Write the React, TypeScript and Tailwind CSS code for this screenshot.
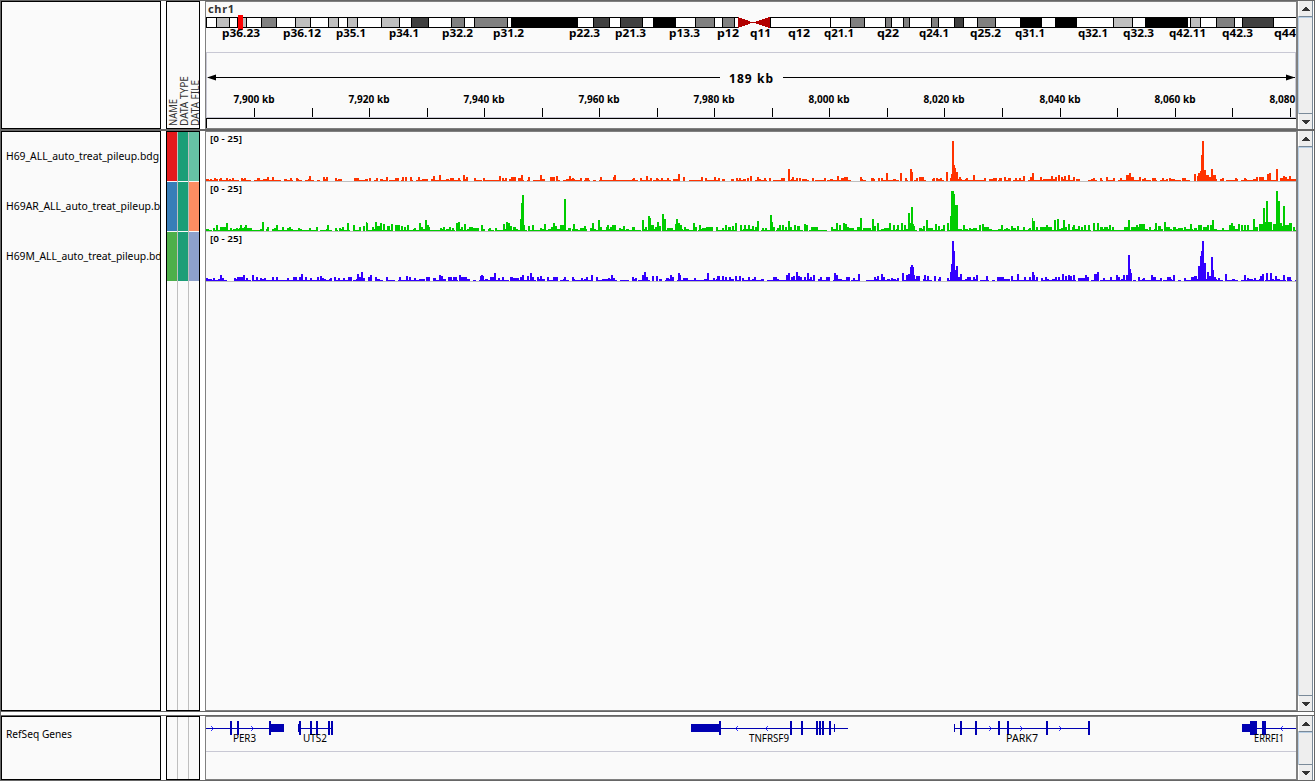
const FONT = "font-['Noto_Sans','Open_Sans',sans-serif]";

type BandTone = "light" | "mid" | "dark" | "black";

const BAND_FILL: Record<BandTone, string> = {
  light: "#bfbfbf",
  mid: "#808080",
  dark: "#404040",
  black: "#000000",
};

// [start, end, stain]
const BANDS: [number, number, BandTone][] = [
  [216, 229, "light"],
  [237, 246, "light"],
  [261, 276, "mid"],
  [295, 310, "light"],
  [328, 338, "light"],
  [347, 357, "light"],
  [381, 399, "light"],
  [411, 428, "dark"],
  [451, 464, "mid"],
  [474, 507, "mid"],
  [511, 577, "black"],
  [593, 609, "dark"],
  [620, 642, "dark"],
  [653, 675, "black"],
  [695, 714, "mid"],
  [722, 734, "mid"],
  [850, 864, "mid"],
  [885, 891, "mid"],
  [903, 909, "mid"],
  [931, 938, "mid"],
  [954, 963, "dark"],
  [977, 995, "mid"],
  [1020, 1041, "black"],
  [1055, 1076, "black"],
  [1113, 1132, "light"],
  [1145, 1187, "black"],
  [1190, 1200, "light"],
  [1216, 1234, "mid"],
  [1242, 1273, "dark"],
];

// [text, x, width]
const BAND_LABELS: [string, number, number][] = [
  ["p36.23", 222, 38],
  ["p36.12", 283, 38],
  ["p35.1", 336, 30],
  ["p34.1", 389, 30],
  ["p32.2", 442, 31],
  ["p31.2", 493, 31],
  ["p22.3", 569, 31],
  ["p21.3", 615, 31],
  ["p13.3", 669, 31],
  ["p12", 717, 22],
  ["q11", 750, 21],
  ["q12", 788, 22],
  ["q21.1", 824, 30],
  ["q22", 877, 22],
  ["q24.1", 919, 30],
  ["q25.2", 970, 31],
  ["q31.1", 1015, 30],
  ["q32.1", 1078, 30],
  ["q32.3", 1123, 31],
  ["q42.11", 1169, 37],
  ["q42.3", 1222, 31],
  ["q44", 1274, 22],
];

const TICKS = [
  254, 312, 369, 427, 484, 542, 599, 657, 714, 772, 829, 887, 944, 1002, 1060,
  1117, 1175, 1232, 1290,
];

// Signal columns as x:height or x:height:width, two pixels wide by default.
const TRACKS = [
  {
    name: "H69_ALL_auto_treat_pileup.bdg",
    nameWidth: 153,
    color: "#ff3300",
    density: 0.68,
    seed: 11,
    cells: ["bg-[#e41a1c]", "bg-[#1b9e77]", "bg-[#66c2a5]"],
    signal:
      "210:2 214:3 219:2 220:3 226:3 229:2 232:3 241:3 244:3 257:3:3 263:2:5 267:4 272:4 290:3 296:3 309:5 323:4 326:4 335:3 338:2:4 354:3:5 369:3 376:3 386:4 395:3:4 402:4 405:4 410:4 418:4 433:5 439:6 450:3:4 458:3 463:6 466:4 474:3 483:3 499:5 502:3 505:3 511:4:5 518:3:5 521:6 528:4 540:6 550:4:5 556:5 569:5 572:3 580:3 585:3:4 600:4 613:4 614:6 633:3 640:3 646:5 650:3 656:3 661:3 667:3 673:2:4 678:7 683:4 701:4 705:3 714:4 718:3 723:2 736:3 739:3 747:3 750:5 757:4 764:3 769:3 781:3:4 788:12 792:4 796:3 799:3 802:2:5 812:3 824:3 837:5 841:3:4 844:4:4 860:4 871:3:3 878:3 881:3 886:8 900:8 905:3 910:12 911:9:2 916:3 919:4:5 933:3 936:3 940:3 946:9 950:3 951:7:1 952:40 954:16:1 955:13:1 956:9:2 959:4 966:3 973:6 984:3 993:3:4 999:3:3 1004:4 1008:3:3 1015:3 1019:3 1023:5 1030:4 1032:8 1040:4 1051:5 1055:4 1058:6 1061:4 1064:5 1068:6 1073:4 1078:2 1093:3 1100:3 1106:4 1113:3 1120:3 1126:6:4 1129:8 1131:4:3 1139:4 1144:3 1152:3:4 1162:3 1166:2 1169:3 1182:3:4 1194:7 1197:5:2 1198:8:2 1200:10:2 1201:26:1 1202:40:2 1204:11:2 1206:6:3 1209:4:2 1211:12:2 1213:6:3 1222:3 1235:3 1244:3 1256:4 1259:4:5 1267:7:2 1269:8:2 1276:12:2 1280:3:3 1283:5:2 1285:4:2 1289:5:2",
  },
  {
    name: "H69AR_ALL_auto_treat_pileup.bdg",
    nameWidth: 167,
    color: "#00cc00",
    density: 0.85,
    seed: 29,
    cells: ["bg-[#377eb8]", "bg-[#1b9e77]", "bg-[#fc8d62]"],
    signal:
      "213:3 216:6 220:4:6 226:8 230:3 236:3 239:3:13 240:6 244:4 245:6 262:9 267:4 274:3 276:6 282:4 287:3 289:4 298:3 309:3 316:4 327:6 335:3 339:3 342:4 347:8 353:6 359:4 363:5 366:9:1 367:8:1 372:4 375:9 377:5:3 380:8 383:7:2 387:5:3 391:7 395:6:4 398:6 401:5 404:4 407:6 414:3 419:8 421:4 425:11 427:6 428:4 440:3 443:4 449:4 452:3 456:8 458:9 461:4 464:7 469:4:4 473:3:6 481:6 489:3 495:3 503:7 506:9 508:8:2 510:5:2 513:4:3 520:12:1 521:28:1 522:36:2 524:6:1 528:5 532:6 540:3 544:7 551:4 553:8 555:5:2 560:6:4 564:32 568:3:3 573:7 580:3:5 584:5 590:3 592:8 598:11 600:4 606:4 607:6 610:4:4 612:6:4 619:3 623:5 627:2 632:4:3 642:11 645:4 648:15 650:13:1 651:6:3 655:4 657:9 659:5 662:17 664:12:2 667:3:6 675:7 676:12 678:8:2 680:6:2 684:4 693:8 695:4 699:6 702:3:8 706:4:7 716:4 722:3 725:6:2 728:4:3 732:5 735:8 740:6 744:6 748:6 752:5 755:4:3 757:10 762:3 765:3 770:16 772:9:1 773:4:2 777:3 779:6 782:6 785:4:2 788:10 790:4 794:6 797:5:3 804:7 806:6:2 811:4:7 831:4 836:8 839:6 843:8:2 845:7:2 847:4:2 849:3:5 857:4:4 860:13 863:3:8 872:12 874:5 877:8 884:3:5 889:8 893:6 897:6 901:8 904:6 908:18 909:8 911:24 913:7:1 914:5:1 919:3:3 923:5 926:11 928:3:5 935:7 938:5 943:6 947:8 950:15:1 951:40:3 954:37:1 955:26:3 963:6 969:3 973:3:4 979:6 982:7 984:4:5 1001:6 1006:3 1011:5 1013:3:3 1017:5 1023:4 1029:3 1032:13:1 1033:10:2 1036:4 1040:4:3 1043:4:4 1046:6 1048:4:4 1054:11 1057:12 1061:3 1063:11 1065:4 1068:7 1072:4 1073:6:2 1078:5 1081:4 1084:6 1088:6 1093:8 1097:8 1100:4:3 1104:4:4 1109:6 1112:4 1124:4:4 1128:11 1131:4:8 1136:6 1139:7:6 1149:4 1155:8 1158:5:3 1164:9 1166:4:4 1173:4:3 1178:3:5 1184:4 1190:7 1194:3:3 1198:6:4 1203:4:4 1207:6:2 1210:6:2 1212:11:2 1222:3 1229:6 1231:8 1233:5 1238:7 1241:6 1244:6 1247:6 1253:12 1255:4:3 1259:7:4 1263:23:2 1265:9:1 1266:30:2 1268:9:4 1273:7:3 1276:40:2 1278:30:2 1280:8:2 1282:5:1 1283:25:2 1285:6:4 1289:8:3 1293:4:2",
  },
  {
    name: "H69M_ALL_auto_treat_pileup.bdg",
    nameWidth: 162,
    color: "#3300ff",
    density: 0.8,
    seed: 47,
    cells: ["bg-[#4daf4a]", "bg-[#1b9e77]", "bg-[#8da0cb]"],
    signal:
      "206:3 213:3 220:6 222:3 234:3 237:4:3 240:4:4 243:6 246:3 252:6 256:4 260:3 264:3 272:4 276:4 287:3 293:4:4 299:4 301:7 305:4 310:3 317:4 320:5 322:3 330:3 334:4 338:3 343:3 348:4:4 357:7 359:4 361:9 363:3 368:4 370:6 375:4 386:4 399:4 406:5 409:4 414:3 426:4:4 433:3:3 439:6 441:5 448:4:4 453:4:4 459:6 461:4:6 480:5:1 481:6:2 483:5:1 490:4:4 494:8 498:3 502:4 510:4:3 513:3:6 520:4 522:6 527:5 530:8 532:4 537:4 540:5 547:4 553:4:5 564:4 572:4 581:3 586:4 591:6 596:4 608:3 611:6 613:3 632:4 635:3 642:6 644:9 646:4 652:5 656:5 666:3:3 670:6 672:4 678:8 680:6:1 683:3:5 694:3 707:8 713:3 717:5:3 722:5:2 725:4 729:4 735:5 739:5:2 742:3 748:4 754:4 773:4:4 786:6 788:8 791:4 793:5 796:9 798:5 800:4 804:4 807:8 810:4 813:6 820:4 826:4:4 834:8 836:6 846:4:4 853:3 858:7 874:4 877:5 881:7 883:4 891:3 897:3 902:8 906:6 908:7:2 910:14:1 911:16:2 913:14:1 914:6:1 916:5:4 924:6 927:5 934:5 939:4 947:3 950:9:1 951:17:1 952:40:2 954:30:1 955:11:1 956:15:2 958:4 960:7 967:4:4 973:4 976:6 986:5 997:4:7 1002:4 1011:5 1017:7 1024:4 1029:4 1032:9 1034:6:1 1036:4 1041:3 1045:4 1055:4 1058:4 1062:7 1065:5 1068:6 1070:5 1073:6 1078:3:7 1085:6 1087:4 1094:7:4 1097:9 1103:3 1110:4 1116:6 1118:4 1123:6 1126:6:2 1128:26 1130:12:1 1131:8:1 1138:4 1143:3 1151:6 1153:4:3 1160:3 1167:4:4 1173:6 1184:3 1191:4:4 1194:5:3 1198:15:2 1200:25:1 1201:30:1 1202:40:2 1204:18:2 1207:9 1209:5 1211:24:2 1213:11:1 1214:4:2 1218:3 1225:7 1244:6 1247:3 1254:3 1260:5 1262:7 1266:8 1270:8 1275:5 1283:6 1287:4:4",
  },
];

type Gene = {
  name: string;
  label: [number, number];
  line: [number, number];
  exons: [number, number][];
  utrs: [number, number][];
  arrows: number[];
  forward: boolean;
};

const GENES: Gene[] = [
  {
    name: "PER3",
    label: [233, 23],
    line: [206, 271],
    exons: [[230, 2], [237, 2], [269, 2]],
    utrs: [[271, 13]],
    arrows: [213, 253],
    forward: true,
  },
  {
    name: "UTS2",
    label: [303, 24],
    line: [298, 333],
    exons: [[299, 2], [310, 2], [316, 2], [328, 2], [331, 2]],
    utrs: [[298, 2]],
    arrows: [],
    forward: false,
  },
  {
    name: "TNFRSF9",
    label: [749, 40],
    line: [720, 848],
    exons: [[719, 2], [790, 2], [801, 2], [816, 2], [819, 2], [822, 2], [829, 2]],
    utrs: [[691, 29], [834, 1]],
    arrows: [736, 766],
    forward: false,
  },
  {
    name: "PARK7",
    label: [1006, 32],
    line: [954, 1090],
    exons: [[960, 2], [975, 2], [998, 2], [1007, 2], [1046, 2], [1088, 2]],
    utrs: [[954, 1]],
    arrows: [991, 1022, 1061],
    forward: true,
  },
  {
    name: "ERRFI1",
    label: [1254, 30],
    line: [1250, 1296],
    exons: [[1250, 7], [1262, 4]],
    utrs: [[1242, 8]],
    arrows: [1281],
    forward: false,
  },
];

// Low background coverage between the called columns.
function background(seed: number, density: number, base: number) {
  let s = seed;
  let d = "";
  for (let x = 206; x < 1296; x += 3) {
    s = (s * 16807) % 2147483647;
    const r = s / 2147483647;
    if (r > density) continue;
    const h = r < density * 0.25 ? 2 : 1;
    d += `M${x} ${base}v-${h}h3v${h}z`;
  }
  return d;
}

function columns(signal: string, base: number) {
  return signal
    .split(" ")
    .map((item) => {
      const [x, h, w = 2] = item.split(":").map(Number);
      return `M${x} ${base}v-${h}h${w}v${h}z`;
    })
    .join("");
}

function ScrollBar() {
  return (
    <div className="flex w-[17px] shrink-0 flex-col border-l border-[#808080] bg-white pr-px">
      <div className="flex grow flex-col border-r border-[#7a8a99] bg-[#eeeeee]">
        <div className="flex h-4 items-center justify-center border-b border-l border-b-[#7a8a99] border-l-white">
          <svg width="8" height="4" className="fill-[#333333]" shapeRendering="crispEdges">
            <path d="M3 0h2v1h1v1h1v1h1v1H0V3h1V2h1V1h1z" />
          </svg>
        </div>
        <div className="grow border-t border-l border-[#b8cfe5]" />
        <div className="flex h-4 items-center justify-center border-t border-l border-t-[#7a8a99] border-l-white">
          <svg width="8" height="4" className="fill-[#333333]" shapeRendering="crispEdges">
            <path d="M0 0h8v1H7v1H6v1H5v1H3V3H2V2H1V1H0z" />
          </svg>
        </div>
      </div>
    </div>
  );
}

function TrackName({ name, width }: { name: string; width: number }) {
  return (
    <svg width="158" height="50" className={`block shrink-0 text-[11px] ${FONT}`}>
      <text x="4" y="28" textLength={width} lengthAdjust="spacingAndGlyphs">
        {name}
      </text>
    </svg>
  );
}

function AttributeHeader() {
  const names: [string, number, number][] = [
    ["NAME", 10, 27],
    ["DATA TYPE", 21, 50],
    ["DATA FILE", 32, 46],
  ];
  return (
    <svg width="32" height="126" className={`text-[10px] ${FONT}`}>
      {names.map(([name, x, length]) => (
        <text
          key={name}
          transform={`translate(${x} 124) rotate(-90)`}
          textLength={length}
          lengthAdjust="spacingAndGlyphs"
          fill="#333"
        >
          {name}
        </text>
      ))}
    </svg>
  );
}

function Ideogram() {
  return (
    <g shapeRendering="crispEdges">
      <rect x="206" y="17" width="532" height="11" fill="#000" />
      <rect x="207" y="18" width="531" height="9" fill="#fff" />
      <rect x="770" y="17" width="526" height="11" fill="#000" />
      <rect x="771" y="18" width="525" height="9" fill="#fff" />
      <rect x="830" y="18" width="1" height="9" fill="#000" />
      {BANDS.map(([start, end, tone]) => (
        <rect
          key={start}
          x={start + 0.5}
          y="17.5"
          width={end - start}
          height="10"
          fill={BAND_FILL[tone]}
          stroke="#000"
        />
      ))}
      <path d="M738 17l15 5.5l-15 5.5zM770 17l-17 5.5l17 5.5z" fill="#b20000" />
      <rect x="238" y="15" width="5" height="15" fill="#f00" />
    </g>
  );
}

function Header() {
  return (
    <svg width="1090" height="126" viewBox="206 2 1090 126" className={FONT}>
      <text x="208" y="13" textLength="26" className="text-[11px] font-bold" fill="#333">
        chr1
      </text>
      <Ideogram />
      <g className="text-[11px] font-bold">
        {BAND_LABELS.map(([label, x, length]) => (
          <text key={label} x={x} y="37" textLength={length} lengthAdjust="spacingAndGlyphs">
            {label}
          </text>
        ))}
      </g>
      <g shapeRendering="crispEdges">
        <path d="M206.5 118V52.5H1295.5V117.5H206" fill="none" stroke="#c8c8d4" />
        <path d="M206.5 128V118.5H1296" fill="none" stroke="#000" />
        <path d="M208 77.5H720M783 77.5H1295" stroke="#000" />
        {TICKS.map((x) => (
          <rect key={x} x={x} y="108" width="1" height="9" />
        ))}
      </g>
      <path d="M207 77.5l9-3v6zM1295 77.5l-9-3v6z" />
      <text x="729" y="83" textLength="44" className="text-[12px] font-bold">
        189 kb
      </text>
      <g className="text-[10px] font-bold">
        {TICKS.filter((_, i) => i % 2 === 0).map((x, i) => (
          <text key={x} x={x - 20.5} y="103.4" textLength="41" lengthAdjust="spacingAndGlyphs">
            {`${(7900 + i * 20).toLocaleString("en-US")} kb`}
          </text>
        ))}
      </g>
    </svg>
  );
}

function Coverage() {
  return (
    <svg width="1090" height="150" viewBox="206 132 1090 150" className={FONT}>
      {TRACKS.map((track, i) => {
        const base = 181 + i * 50;
        return (
          <g key={track.name}>
            <path
              d={background(track.seed, track.density, base) + columns(track.signal, base)}
              fill={track.color}
              shapeRendering="crispEdges"
            />
            <rect x="206" y={base} width="1090" height="1" fill="#bfbfbf" />
            <text
              x="210"
              y={base - 39.5}
              textLength="32"
              lengthAdjust="spacingAndGlyphs"
              className="text-[8px] font-semibold"
            >
              [0 - 25]
            </text>
          </g>
        );
      })}
    </svg>
  );
}

function Genes() {
  return (
    <svg width="1090" height="62" viewBox="206 717 1090 62" className={FONT}>
      <rect x="206" y="751" width="1090" height="1" fill="#c8c8d4" />
      {GENES.map((gene) => (
        <g key={gene.name}>
          <g fill="#0000b2" shapeRendering="crispEdges">
            <rect x={gene.line[0]} y="728" width={gene.line[1] - gene.line[0]} height="1" />
            {gene.utrs.map(([x, w]) => (
              <rect key={x} x={x} y="724" width={w} height="8" />
            ))}
            {gene.exons.map(([x, w]) => (
              <rect key={x} x={x} y="721" width={w} height="14" />
            ))}
          </g>
          {gene.arrows.map((x) => (
            <path
              key={x}
              d={gene.forward ? `M${x - 2} 726l2.5 2.5l-2.5 2.5` : `M${x + 2} 726l-2.5 2.5l2.5 2.5`}
              fill="none"
              stroke="#0000ff"
              strokeWidth="0.8"
            />
          ))}
          <text
            x={gene.label[0]}
            y="742"
            textLength={gene.label[1]}
            lengthAdjust="spacingAndGlyphs"
            className="text-[11px]"
          >
            {gene.name}
          </text>
        </g>
      ))}
    </svg>
  );
}

function AttributeColumns({ rows }: { rows: string[][] }) {
  return (
    <div className="grid grow grid-cols-3 gap-px bg-[#bfbfbf]">
      {[0, 1, 2].map((col) => (
        <div key={col} className="flex flex-col gap-px bg-[#fafafa]">
          {rows.map((cells) => (
            <div key={cells[0]} className={`h-[49px] ${cells[col]}`} />
          ))}
        </div>
      ))}
    </div>
  );
}

const namePanel = "w-40 shrink-0 overflow-hidden border border-black bg-[#fafafa]";
const attributePanel = "flex w-[34px] shrink-0 overflow-hidden border border-black bg-[#fafafa]";
const dataPanel = "w-[1092px] shrink-0 border border-[#808080] bg-[#fafafa]";

export default function App() {
  return (
    <div className={`flex h-[781px] w-[1315px] flex-col overflow-hidden border border-[#666666] bg-white text-[11px] text-black ${FONT}`}>
      <div className="flex h-32 shrink-0">
        <div className={namePanel} />
        <div className={`ml-[5px] ${attributePanel}`}>
          <AttributeHeader />
        </div>
        <div className={`ml-[5px] ${dataPanel}`}>
          <Header />
        </div>
        <ScrollBar />
      </div>
      <div className="h-0.5 shrink-0 bg-[#666666]" />
      <div className="flex h-[580px] shrink-0">
        <div className={namePanel}>
          {TRACKS.map((track) => (
            <TrackName key={track.name} name={track.name} width={track.nameWidth} />
          ))}
        </div>
        <div className={`ml-[5px] ${attributePanel}`}>
          <AttributeColumns rows={TRACKS.map((track) => track.cells)} />
        </div>
        <div className={`ml-[5px] ${dataPanel}`}>
          <Coverage />
        </div>
        <ScrollBar />
      </div>
      <div className="h-[5px] shrink-0 border-y border-[#666666]" />
      <div className="flex h-16 shrink-0">
        <div className={`${namePanel} -mt-0`}>
          <div className="-mt-[7px]">
            <TrackName name="RefSeq Genes" width={66} />
          </div>
        </div>
        <div className={`ml-[5px] ${attributePanel}`}>
          <AttributeColumns rows={[]} />
        </div>
        <div className={`ml-[5px] ${dataPanel}`}>
          <Genes />
        </div>
        <ScrollBar />
      </div>
    </div>
  );
}
